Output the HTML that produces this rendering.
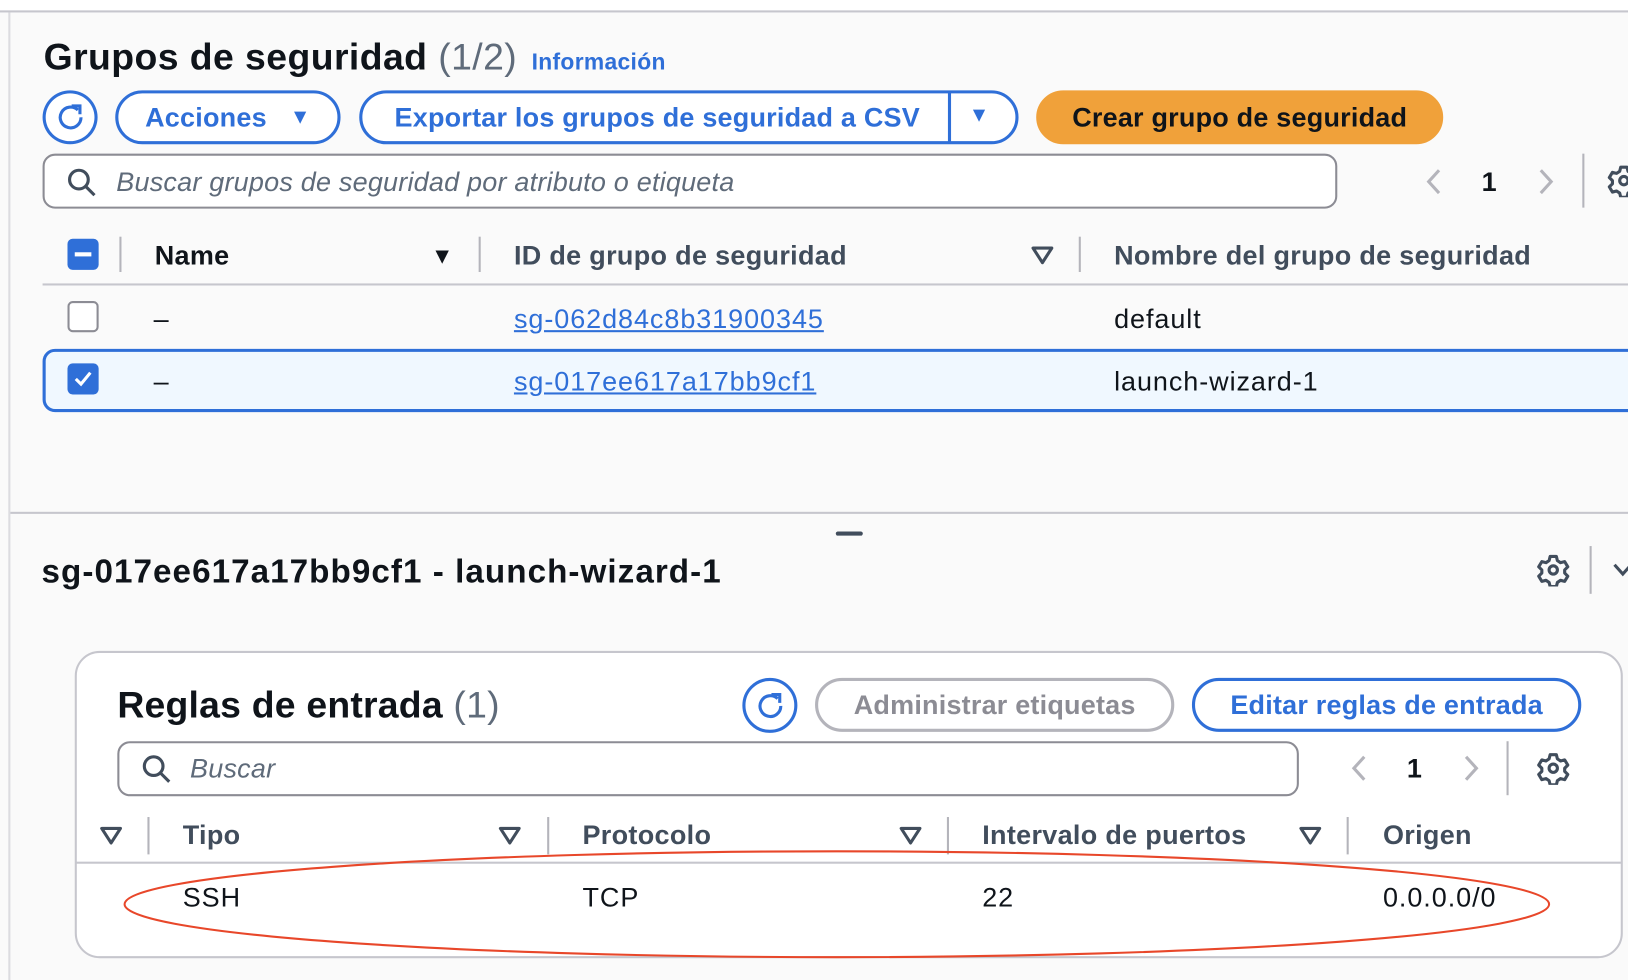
<!DOCTYPE html>
<html><head><meta charset="utf-8"><style>
html,body{margin:0;padding:0;width:1628px;height:980px;overflow:hidden;background:#fff}
#s{position:absolute;left:0;top:0;width:1568px;height:944px;transform:scale(1.03827,1.03814);transform-origin:0 0;background:#fafafa;font-family:"Liberation Sans",sans-serif;color:#0f141a}
.a{position:absolute;white-space:nowrap}
.btn{position:absolute;box-sizing:border-box;border:3px solid #2f6fd8;border-radius:26px;color:#2f6fd8;font-weight:bold;font-size:26px;display:flex;align-items:center;justify-content:center;background:#fff;letter-spacing:0.2px}
.hd{font-weight:bold;font-size:26px;color:#414d5c;letter-spacing:0.3px}
.dv{position:absolute;width:2px;background:#b4b4bb}
.srch{position:absolute;box-sizing:border-box;border:2px solid #8c8c94;border-radius:12px;background:#fff}
.ph{font-style:italic;color:#5f6b7a;font-size:26px;letter-spacing:0.2px}
.cell{font-size:26px;letter-spacing:0.9px}
a{color:#2f6fd8;text-decoration:underline}
</style></head><body><div id="s">
<div class="a" style="left:0;top:0;width:1568px;height:10px;background:#fff"></div>
<div class="a" style="left:0;top:10px;width:1568px;height:2px;background:#c6c6cd"></div>
<div class="a" style="left:8px;top:12px;width:2px;height:932px;background:#dcdce0"></div>

<div class="a" style="left:42px;top:34px;font-size:36px;font-weight:bold;letter-spacing:0.4px">Grupos de seguridad <span style="font-weight:normal;color:#5f6b7a">(1/2)</span></div>
<div class="a" style="left:512px;top:47px;font-size:22px;font-weight:bold;color:#2f6fd8;letter-spacing:0.3px">Información</div>

<div class="btn" style="left:41px;top:87px;width:53px;height:52px;border-radius:50%"><svg width="30" height="30" viewBox="0 0 30 30"><path d="M22 8A10 10 0 1 0 25 15" fill="none" stroke="#2f6fd8" stroke-width="3"/><path d="M16 4h8v8" fill="none" stroke="#2f6fd8" stroke-width="3"/></svg></div>
<div class="btn" style="left:111px;top:87px;width:217px;height:52px">Acciones&nbsp;&nbsp;&nbsp;<span style="font-size:20px">▼</span></div>
<div class="btn" style="left:346px;top:87px;width:635px;height:52px;justify-content:flex-start;padding-left:31px">Exportar los grupos de seguridad a CSV</div>
<div class="a" style="left:913px;top:88px;width:3px;height:50px;background:#2f6fd8"></div>
<div class="a" style="left:933px;top:100px;color:#2f6fd8;font-size:20px">▼</div>
<div class="btn" style="left:998px;top:87px;width:392px;height:52px;background:#f0a13a;border-color:#f0a13a;color:#0f141a">Crear grupo de seguridad</div>

<div class="srch" style="left:41px;top:148px;width:1247px;height:53px"></div>
<svg class="a" style="left:64px;top:161px" width="30" height="30" viewBox="0 0 30 30"><circle cx="12" cy="12" r="9" fill="none" stroke="#414d5c" stroke-width="3"/><path d="M19 19l8 8" stroke="#414d5c" stroke-width="3"/></svg>
<div class="a ph" style="left:112px;top:160px">Buscar grupos de seguridad por atributo o etiqueta</div>
<svg class="a" style="left:1371px;top:161px" width="20" height="28"><path d="M15 3L5 14l10 11" fill="none" stroke="#b4b4bb" stroke-width="3"/></svg>
<div class="a" style="left:1427px;top:160px;font-size:26px;font-weight:bold">1</div>
<svg class="a" style="left:1479px;top:161px" width="20" height="28"><path d="M5 3l10 11L5 25" fill="none" stroke="#b4b4bb" stroke-width="3"/></svg>
<div class="dv" style="left:1524px;top:148px;height:52px"></div>
<svg class="a" style="left:1548px;top:158px" width="32" height="32" viewBox="0 0 32 32"><path d="M13 3h6l1 4 3 2 4-1 3 5-3 3v3l3 3-3 5-4-1-3 2-1 4h-6l-1-4-3-2-4 1-3-5 3-3v-3L2 13l3-5 4 1 3-2z" fill="none" stroke="#414d5c" stroke-width="3" stroke-linejoin="round"/><circle cx="16" cy="16" r="4" fill="none" stroke="#414d5c" stroke-width="3"/></svg>

<div class="a" style="left:65px;top:230px;width:30px;height:30px;background:#2f6fd8;border-radius:5px"><div style="position:absolute;left:7px;top:13px;width:16px;height:4px;background:#fff"></div></div>
<div class="dv" style="left:115px;top:228px;height:34px"></div>
<div class="a hd" style="left:149px;top:231px;color:#0f141a">Name</div>
<div class="a" style="left:415px;top:234px;font-size:22px">▼</div>
<div class="dv" style="left:461px;top:228px;height:34px"></div>
<div class="a hd" style="left:495px;top:231px">ID de grupo de seguridad</div>
<svg class="a" style="left:993px;top:237px" width="22" height="18"><path d="M2 2h18L11 16z" fill="none" stroke="#414d5c" stroke-width="3" stroke-linejoin="round"/></svg>
<div class="dv" style="left:1039px;top:228px;height:34px"></div>
<div class="a hd" style="left:1073px;top:231px">Nombre del grupo de seguridad</div>
<div class="a" style="left:41px;top:273px;width:1527px;height:2px;background:#c6c6cd"></div>

<div class="a" style="left:65px;top:290px;width:26px;height:26px;border:2px solid #8c8c94;border-radius:5px;background:#fff"></div>
<div class="a cell" style="left:148px;top:292px">–</div>
<div class="a cell" style="left:495px;top:292px"><a>sg-062d84c8b31900345</a></div>
<div class="a cell" style="left:1073px;top:292px">default</div>

<div class="a" style="left:41px;top:336px;width:1560px;height:61px;box-sizing:border-box;border:3px solid #2f6fd8;border-radius:12px;background:#f0f8ff"></div>
<div class="a" style="left:65px;top:350px;width:30px;height:30px;background:#2f6fd8;border-radius:5px"><svg width="30" height="30"><path d="M8 15l5 5 9-11" fill="none" stroke="#fff" stroke-width="3"/></svg></div>
<div class="a cell" style="left:148px;top:352px">–</div>
<div class="a cell" style="left:495px;top:352px"><a>sg-017ee617a17bb9cf1</a></div>
<div class="a cell" style="left:1073px;top:352px">launch-wizard-1</div>

<div class="a" style="left:10px;top:493px;width:1558px;height:2px;background:#c6c6cd"></div>
<div class="a" style="left:805px;top:512px;width:26px;height:4px;background:#414d5c;border-radius:2px"></div>
<div class="a" style="left:40px;top:532px;font-size:32px;font-weight:bold;letter-spacing:1px">sg-017ee617a17bb9cf1 - launch-wizard-1</div>
<svg class="a" style="left:1480px;top:533px" width="32" height="32" viewBox="0 0 32 32"><path d="M13 3h6l1 4 3 2 4-1 3 5-3 3v3l3 3-3 5-4-1-3 2-1 4h-6l-1-4-3-2-4 1-3-5 3-3v-3L2 13l3-5 4 1 3-2z" fill="none" stroke="#414d5c" stroke-width="3" stroke-linejoin="round"/><circle cx="16" cy="16" r="4" fill="none" stroke="#414d5c" stroke-width="3"/></svg>
<div class="dv" style="left:1531px;top:526px;height:46px"></div>
<svg class="a" style="left:1552px;top:540px" width="20" height="20"><path d="M3 4l8 9 8-9" fill="none" stroke="#414d5c" stroke-width="3"/></svg>

<div class="a" style="left:72px;top:627px;width:1491px;height:296px;box-sizing:border-box;border:2px solid #c6c6cd;border-radius:24px;background:#fff"></div>
<div class="a" style="left:113px;top:658px;font-size:36px;font-weight:bold;letter-spacing:0.2px">Reglas de entrada <span style="font-weight:normal;color:#5f6b7a">(1)</span></div>
<div class="btn" style="left:715px;top:653px;width:53px;height:53px;border-radius:50%"><svg width="30" height="30" viewBox="0 0 30 30"><path d="M22 8A10 10 0 1 0 25 15" fill="none" stroke="#2f6fd8" stroke-width="3"/><path d="M16 4h8v8" fill="none" stroke="#2f6fd8" stroke-width="3"/></svg></div>
<div class="btn" style="left:785px;top:653px;width:346px;height:52px;border-color:#b4b4bb;color:#8c8c94">Administrar etiquetas</div>
<div class="btn" style="left:1148px;top:653px;width:375px;height:52px">Editar reglas de entrada</div>

<div class="srch" style="left:113px;top:714px;width:1138px;height:53px"></div>
<svg class="a" style="left:136px;top:726px" width="30" height="30" viewBox="0 0 30 30"><circle cx="12" cy="12" r="9" fill="none" stroke="#414d5c" stroke-width="3"/><path d="M19 19l8 8" stroke="#414d5c" stroke-width="3"/></svg>
<div class="a ph" style="left:183px;top:725px">Buscar</div>
<svg class="a" style="left:1299px;top:726px" width="20" height="28"><path d="M15 3L5 14l10 11" fill="none" stroke="#b4b4bb" stroke-width="3"/></svg>
<div class="a" style="left:1355px;top:725px;font-size:26px;font-weight:bold">1</div>
<svg class="a" style="left:1407px;top:726px" width="20" height="28"><path d="M5 3l10 11L5 25" fill="none" stroke="#b4b4bb" stroke-width="3"/></svg>
<div class="dv" style="left:1451px;top:714px;height:52px"></div>
<svg class="a" style="left:1480px;top:724px" width="32" height="32" viewBox="0 0 32 32"><path d="M13 3h6l1 4 3 2 4-1 3 5-3 3v3l3 3-3 5-4-1-3 2-1 4h-6l-1-4-3-2-4 1-3-5 3-3v-3L2 13l3-5 4 1 3-2z" fill="none" stroke="#414d5c" stroke-width="3" stroke-linejoin="round"/><circle cx="16" cy="16" r="4" fill="none" stroke="#414d5c" stroke-width="3"/></svg>

<svg class="a" style="left:96px;top:796px" width="22" height="18"><path d="M2 2h18L11 16z" fill="none" stroke="#414d5c" stroke-width="3" stroke-linejoin="round"/></svg>
<div class="dv" style="left:142px;top:787px;height:36px"></div>
<div class="a hd" style="left:176px;top:789px">Tipo</div>
<svg class="a" style="left:480px;top:796px" width="22" height="18"><path d="M2 2h18L11 16z" fill="none" stroke="#414d5c" stroke-width="3" stroke-linejoin="round"/></svg>
<div class="dv" style="left:527px;top:787px;height:36px"></div>
<div class="a hd" style="left:561px;top:789px">Protocolo</div>
<svg class="a" style="left:866px;top:796px" width="22" height="18"><path d="M2 2h18L11 16z" fill="none" stroke="#414d5c" stroke-width="3" stroke-linejoin="round"/></svg>
<div class="dv" style="left:912px;top:787px;height:36px"></div>
<div class="a hd" style="left:946px;top:789px">Intervalo de puertos</div>
<svg class="a" style="left:1251px;top:796px" width="22" height="18"><path d="M2 2h18L11 16z" fill="none" stroke="#414d5c" stroke-width="3" stroke-linejoin="round"/></svg>
<div class="dv" style="left:1297px;top:787px;height:36px"></div>
<div class="a hd" style="left:1332px;top:789px">Origen</div>
<div class="a" style="left:73px;top:830px;width:1489px;height:2px;background:#c6c6cd"></div>

<div class="a cell" style="left:176px;top:849px">SSH</div>
<div class="a cell" style="left:561px;top:849px">TCP</div>
<div class="a cell" style="left:946px;top:849px">22</div>
<div class="a cell" style="left:1332px;top:849px">0.0.0.0/0</div>
<svg class="a" style="left:0;top:0" width="1568" height="944"><ellipse cx="806" cy="871" rx="686" ry="51" fill="none" stroke="#e8472a" stroke-width="2"/></svg>
</div></body></html>
